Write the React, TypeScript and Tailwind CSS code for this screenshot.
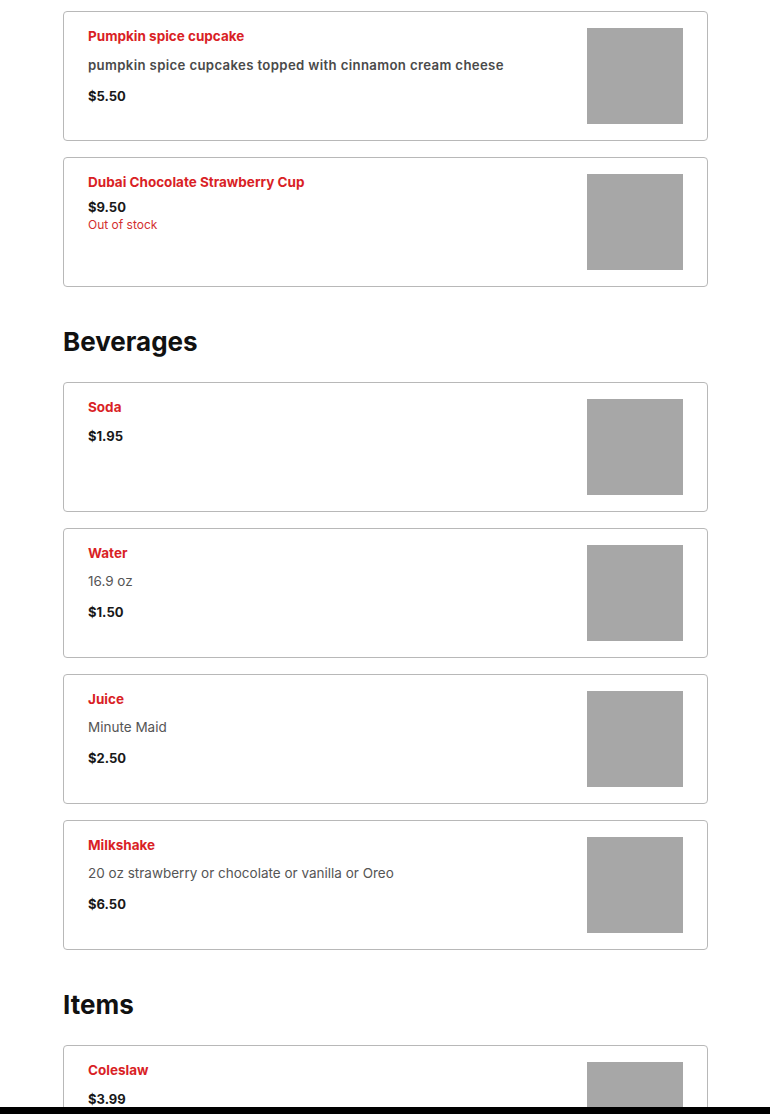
type Item = {
  name: string;
  desc?: string;
  descStrong?: boolean;
  price: string;
  soldOut?: boolean;
};

const cakes: Item[] = [
  {
    name: "Pumpkin spice cupcake",
    desc: "pumpkin spice cupcakes topped with cinnamon cream cheese",
    descStrong: true,
    price: "$5.50",
  },
  { name: "Dubai Chocolate Strawberry Cup", price: "$9.50", soldOut: true },
];

const beverages: Item[] = [
  { name: "Soda", price: "$1.95" },
  { name: "Water", desc: "16.9 oz", price: "$1.50" },
  { name: "Juice", desc: "Minute Maid", price: "$2.50" },
  { name: "Milkshake", desc: "20 oz strawberry or chocolate or vanilla or Oreo", price: "$6.50" },
];

const items: Item[] = [{ name: "Coleslaw", price: "$3.99" }];

function MenuCard({ item }: { item: Item }) {
  return (
    <div className="flex h-[130px] items-start justify-between rounded-[4px] border border-[#b8b8b8] bg-white px-6 py-4">
      <div className="flex flex-col">
        <div className="text-[13.5px] font-bold leading-4 text-[#d91f26]">{item.name}</div>
        {item.desc && (
          <div
            className={
              item.descStrong
                ? "mt-[11px] text-[13.2px] font-semibold leading-5 tracking-[0.35px] text-[#4a4a4a]"
                : "mt-[10px] text-[13.5px] leading-5 text-[#555]"
            }
          >
            {item.desc}
          </div>
        )}
        {item.soldOut ? (
          <div className="mt-2 flex flex-col">
            <span className="text-[13px] font-bold leading-[18px] text-[#191919]">{item.price}</span>
            <span className="text-[12px] leading-[18px] text-[#d32f2f]">Out of stock</span>
          </div>
        ) : (
          <div className="mt-[11px] text-[13px] font-bold leading-5 text-[#191919]">{item.price}</div>
        )}
      </div>
      <div className="h-24 w-24 shrink-0 bg-[#a7a7a7]" />
    </div>
  );
}

function Section({ title, list }: { title?: string; list: Item[] }) {
  return (
    <section>
      {title && (
        <h2 className="mt-[39px] mb-[24px] text-[26px] font-bold leading-8 text-[#111]">{title}</h2>
      )}
      <div className="flex flex-col gap-4">
        {list.map((it) => (
          <MenuCard key={it.name} item={it} />
        ))}
      </div>
    </section>
  );
}

export default function App() {
  return (
    <div className="min-h-screen bg-white pt-[11px] pl-[63px] pr-[62px] font-['Inter',sans-serif]">
      <Section list={cakes} />
      <Section title="Beverages" list={beverages} />
      <Section title="Items" list={items} />
      <div className="h-20" />
      <div className="fixed inset-x-0 bottom-0 h-[7px] bg-black" />
    </div>
  );
}
